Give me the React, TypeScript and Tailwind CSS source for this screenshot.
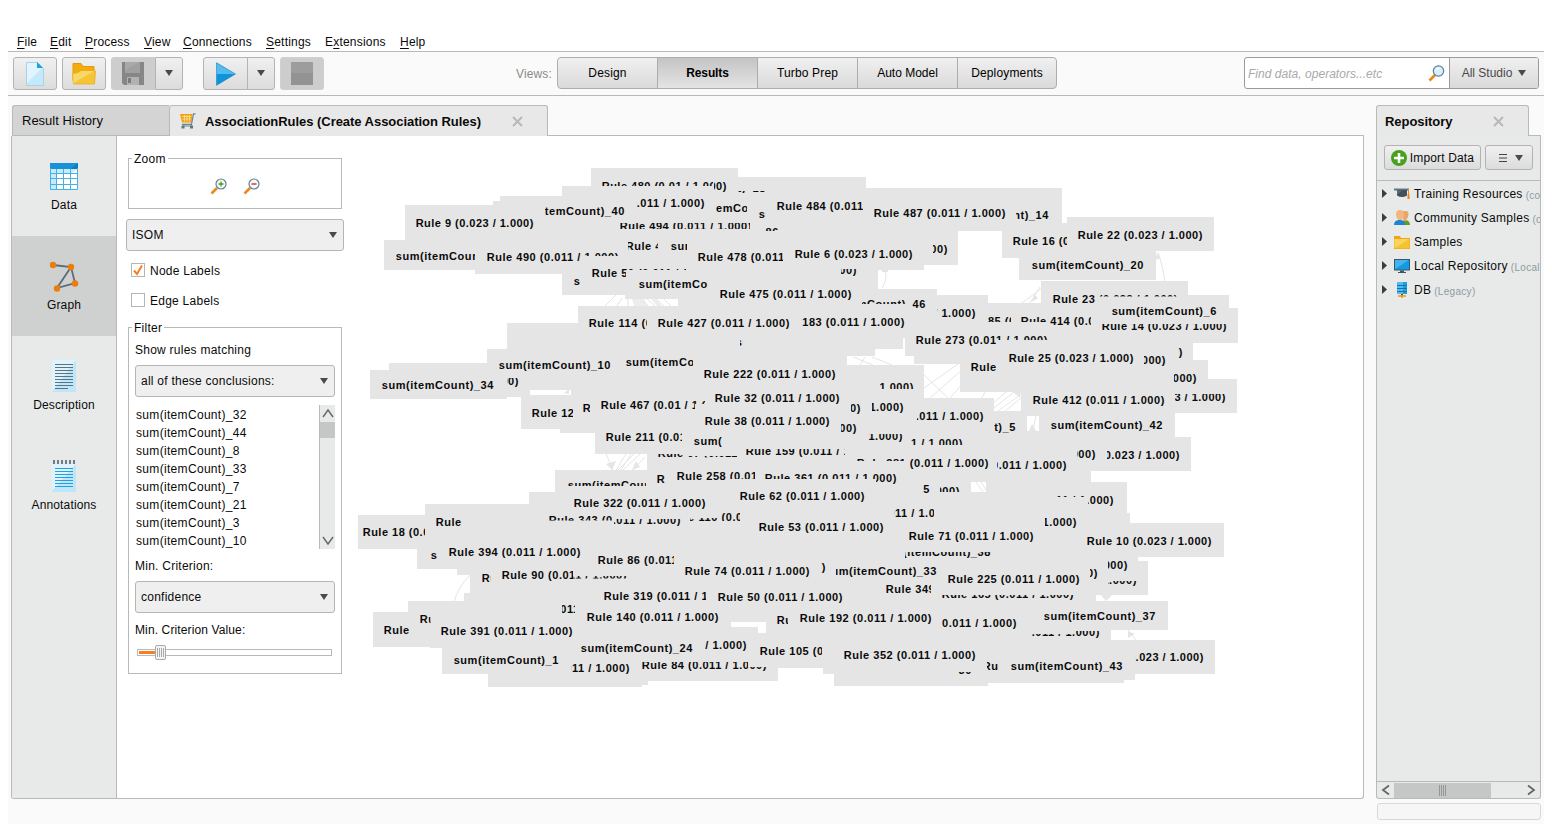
import React from "react";

type Box = [number, number, number, number];
// text, left edge, vertical centre, drawn width, visible windows (x1, y1, x2, y2)
type Label = [string, number, number, number, Box[]?];

const R3 = 131;
const R2 = 124;
const R1 = 117;
const S2 = 111;
const S1 = 104;
const rule = (n: string | number, v = "0.011") => `Rule ${n} (${v} / 1.000)`;
const sum = (n: number) => `sum(itemCount)_${n}`;
const span = (x1: number, x2: number, c: number): Box[] => [[x1, c - 8, x2, c + 8]];

const labels: Label[] = [
  [rule(480, "0.01"), 602, 186, R2, [[600, 170, 713, 186], [714, 170, 730, 196]]],
  [rule(488), 573, 203, R3, span(636, 706, 203)],
  [sum(40), 513, 211, S2, span(545, 626, 211)],
  [rule(494), 620, 226, R3, [[619, 223, 750, 229]]],
  [sum(12), 680, 208, S2, span(716, 747, 208)],
  [sum(18), 654, 188, S2, [[738, 191, 766, 193]]],
  [sum(26), 759, 214, S2, span(758, 766, 214)],
  [rule(484), 777, 206, R3, span(776, 863, 206)],
  [rule(487), 874, 213, R3],
  [sum(14), 937, 215, S2, span(1016, 1050, 215)],
  [sum(86), 667, 232, S2, [[765, 227, 779, 231]]],
  [rule(16, "0.023"), 1013, 241, R2, span(1012, 1067, 241)],
  [rule(22, "0.023"), 1078, 235, R2],
  [rule(9, "0.023"), 416, 223, R1],
  [sum(20), 1032, 265, S2],
  [rule(482), 816, 249, R3, span(933, 949, 249)],
  [sum(31), 396, 256, S2, span(395, 475, 256)],
  [rule(490), 487, 257, R3, [[486, 249, 582, 266], [582, 249, 622, 256]]],
  [rule(495), 626, 246, R3, span(628, 658, 246)],
  [sum(28), 671, 246, S2, span(670, 687, 246)],
  [rule(478), 698, 257, R3, span(697, 783, 257)],
  [rule(6, "0.023"), 795, 254, R1],
  [rule(56), 592, 273, R2, [[591, 265, 626, 282], [626, 265, 686, 270]]],
  [sum(29), 574, 281, S2, span(573, 580, 281)],
  [sum(45), 639, 284, S2, span(638, 708, 284)],
  [rule(475), 720, 294, R3],
  [rule(477), 725, 270, R3, [[841, 269, 858, 276]]],
  [sum(46), 814, 304, S2, [[862, 298, 910, 304], [912, 296, 927, 312]]],
  [rule(114), 589, 323, R3, span(588, 647, 323)],
  [rule(427), 658, 323, R3],
  [rule(183), 773, 322, R3, span(801, 906, 322)],
  [rule(434), 844, 313, R3, span(937, 977, 313)],
  [rule(185), 952, 321, R3, [[987, 314, 1011, 322]]],
  [rule(414), 1021, 321, R3, [[1020, 314, 1050, 322], [1050, 314, 1091, 330]]],
  [rule(23, "0.023"), 1053, 299, R2, [[1052, 291, 1099, 307], [1099, 291, 1178, 296.5]]],
  [sum(6), 1112, 311, S1],
  [rule(14, "0.023"), 1102, 326, R2, [[1101, 324, 1228, 336]]],
  [rule(273), 916, 340, R3, [[915, 332, 996, 348], [996, 332, 1048, 340]]],
  [rule(25, "0.023"), 1009, 358, R2],
  [rule(27), 1041, 360, R2, span(1144, 1167, 360)],
  [rule(29), 1058, 352, R2, span(1178, 1184, 352)],
  [rule(306), 971, 367, R3, span(970, 996, 367)],
  [rule(31), 1072, 378, R2, span(1174, 1198, 378)],
  [rule(17, "0.023"), 1101, 397, R2, [[1175, 394, 1227, 406]]],
  [rule(412), 1033, 400, R3],
  [sum(42), 1051, 425, S2],
  [sum(34), 382, 385, S2],
  [rule(44), 394, 381, R2, [[507, 378, 520, 387]]],
  [sum(10), 499, 365, S2],
  [sum(9), 626, 362, S1, span(625, 693, 362)],
  [sum(11), 736, 342, S2, span(740, 743, 342)],
  [rule(222), 704, 374, R3],
  [rule(32), 715, 398, R2],
  [rule(38), 705, 421, R2],
  [rule(467, "0.01"), 601, 405, R2, [[600, 397, 695, 414], [695, 397, 705, 404]]],
  [rule(170), 583, 408, R3, span(582, 590, 408)],
  [rule(12), 532, 413, R2, span(531, 573, 413)],
  [rule(218), 782, 387, R3, [[879, 379, 915, 389]]],
  [rule(221), 772, 407, R3, span(872, 905, 407)],
  [rule(223), 729, 408, R3, span(851, 862, 408)],
  [rule(226), 725, 428, R3, span(841, 858, 428)],
  [rule(240), 852, 416, R3, span(917, 985, 416)],
  [sum(5), 911, 427, S1, span(994, 1017, 427)],
  [rule(241), 771, 436, R3, [[867, 434, 904, 444]]],
  [rule(244), 831, 443, R3, [[911, 436, 964, 445]]],
  [rule(211), 606, 437, R3, span(605, 682, 437)],
  [sum(41), 694, 441, S2, span(693, 722, 441)],
  [rule(159), 746, 451, R3, [[745, 449, 845, 459]]],
  [rule(67), 658, 453, R2, [[657, 454, 684, 458], [684, 456, 737, 457.5]]],
  [rule(381), 857, 463, R3, [[856, 455, 904, 461], [907, 455, 990, 472]]],
  [rule(382), 935, 465, R3, span(997, 1067, 465)],
  [rule(383), 964, 454, R3, span(1077, 1097, 454)],
  [rule(11, "0.023"), 1055, 455, R2, span(1107, 1181, 455)],
  [rule(258), 677, 476, R3, [[676, 468, 728, 485], [728, 468, 755, 479]]],
  [rule(60), 657, 479, R2, span(656, 665, 479)],
  [sum(15), 568, 485, S2, [[567, 478, 646, 486]]],
  [rule(361), 765, 478, R3, [[764, 470, 876, 479], [876, 470, 898, 487]]],
  [sum(25), 818, 489, S2, span(923, 930, 489)],
  [rule(362), 828, 491, R3, [[940, 484, 961, 492]]],
  [rule(62), 740, 496, R2],
  [rule(322), 574, 503, R3],
  [rule(343), 549, 520, R3, [[548, 513, 612, 520.5], [614, 519, 682, 529]]],
  [rule(110), 669, 517, R3, [[690, 518, 719, 521], [719, 510, 740, 521]]],
  [rule(371), 821, 513, R3, span(894, 934, 513)],
  [rule(53), 759, 527, R2],
  [rule(71), 909, 536, R2],
  [rule(10, "0.023"), 1087, 541, R2],
  [rule(93), 989, 500, R2, [[1088, 492, 1115, 508], [1056, 492, 1086, 497]]],
  [rule(95), 952, 522, R2, span(1045, 1077, 522)],
  [rule(18, "0.023"), 363, 532, R2, span(362, 425, 532)],
  [rule(390), 436, 522, R3, span(435, 462, 522)],
  [sum(19), 431, 555, S2, span(430, 437, 555)],
  [rule(394), 449, 552, R3],
  [rule(91), 482, 578, R2, span(481, 491, 578)],
  [rule(90), 502, 575, R2, [[501, 567, 573, 584], [573, 576, 628, 578.5]]],
  [rule(86), 598, 560, R2, span(597, 674, 560)],
  [rule(74), 685, 571, R2],
  [rule(76), 701, 567, R2, span(821, 828, 567)],
  [sum(33), 825, 571, S2, span(836, 938, 571)],
  [sum(38), 879, 552, S2, [[905, 552, 992, 562]]],
  [rule(225), 948, 579, R3],
  [rule(349), 886, 589, R3, span(885, 931, 589)],
  [rule(227), 966, 573, R3, span(1090, 1099, 573)],
  [rule(229), 996, 565, R3, span(1108, 1129, 565)],
  [rule(230), 1005, 580, R3, [[1108, 581, 1138, 590]]],
  [rule(165), 942, 594, R3, [[941, 595, 1075, 604]]],
  [rule(319), 604, 596, R3, span(603, 706, 596)],
  [rule(50), 718, 597, R2],
  [rule(301), 493, 609, R3, [[562, 602, 575, 613]]],
  [rule(140), 587, 617, R3],
  [rule(192), 800, 618, R3],
  [rule(190), 777, 620, R3, span(776, 788, 620)],
  [rule(193), 885, 623, R3, span(942, 1018, 623)],
  [sum(37), 1044, 616, S2],
  [rule(196), 968, 632, R3, [[1032, 634, 1074, 637], [1074, 631, 1101, 641]]],
  [rule(388), 384, 630, R3, span(383, 409, 630)],
  [rule(389), 420, 619, R3, span(419, 430.5, 619)],
  [rule(391), 441, 631, R3],
  [sum(1), 454, 660, S1],
  [sum(24), 581, 648, S2],
  [rule(101), 498, 668, R3, span(571, 631, 668)],
  [rule(103), 615, 645, R3, span(704, 748, 645)],
  [rule(84), 642, 665, R2, [[641, 662, 748, 674], [748, 667, 768, 673]]],
  [rule(105), 760, 651, R3, span(759, 822, 651)],
  [rule(352), 844, 655, R3],
  [rule(13, "0.023"), 1079, 657, R2, span(1135, 1205, 657)],
  [sum(43), 1011, 666, S2],
  [rule(353), 983, 666, R3, span(987, 999, 666)],
  [sum(30), 860, 670, S2, [[957, 672, 972, 675]]],
];

const silhouette =
  "M591 168H738V177H866V188H1062V223H1067V217H1214V251H1156V280H1019V258H1002V231H958V265H924V270H878V289H937V295H988V303H1041V281H1188V295H1229V308H1238V343H1193V360H1208V379H1237V413H1175V437H1191V471H1091V482H1127V513H1130V523H1224V557H1138V561H1148V595H1112V601H1168V630H1111V640H1215V674H1135V680H1124V683H988V686H834V674H823V668H778V681H648V685H642V687H488V674H442V648H430V647H373V612H408V601H464V593H470V575H457V569H417V549H358V515H425V504H529V492H555V470H647V454H595V433H560V429H521V397H507V399H370V370H389V363H487V349H507V323H578V306H678V299H625V295H562V274H475V270H384V240H405V205H493V201H500V196H562V186H591Z";
const gaps =
  "M875 349H903V338H905V356H914V364H960V392H1021V411H994V398H924V365H847V356H875Z M1027 416H1039V431H1027Z M971 482H986V492H971Z M731 622H766V633H758V627H731Z M1096 595H1112V601H1096Z M530 390H571V395H530Z";

function RuleGraph() {
  return (
    <svg className="block h-[662px] w-[1019px]" viewBox="344 136 1019 662">
      <defs>
        {labels.map((l, i) =>
          l[4] ? (
            <clipPath id={`label-${i}`} key={i}>
              {l[4].map((b, j) => (
                <rect key={j} x={b[0]} y={b[1]} width={b[2] - b[0]} height={b[3] - b[1]} />
              ))}
            </clipPath>
          ) : null,
        )}
      </defs>
      <path d={`${silhouette} ${gaps}`} fill="#e5e5e5" fillRule="evenodd" shapeRendering="crispEdges" />
      <g stroke="#e5e5e5" strokeWidth="1" fill="none">
        <path d="M605 306l12-12M617 306l5-8M628 299v7M640 299l8 7M647 299l8 7M656 299l8 7M664 299l7 7M470 575q-12 12-16 27" />
        <path d="M606 454l7 16M634 454l-16 16M640 454l-17 16M626 454l-10 16M645 457l-12 13M631 454l-10 16" />
        <path d="M1158 252q5 14 7 30M1022 303l20-15M1040 287l-10 16M885 270q3 9-3 18M924 388l34-24M924 375l24 23M865 357l-5 8M853 357l20 8M872 357l20 8" />
        <path d="M930 398l33-29M950 398l15-17M975 411l10-19M984 411l22-19M994 408l20-16M998 411l22-16M1005 411l16-13M1036 416l-3 15M976 482l7 10M981 482l5 8M1128 630l8 10" />
      </g>
      <g fill="#e5e5e5">
        <path d="M606 464l6 6 4-9zM636 461l-4 9 8-3zM1032 302l2-8 4 4zM1157 253l-2 7 6-2zM882 272h6v-3h-6zM1020 398l-7-6h8zM1029 431l3-7 4 7zM1101 595l5 6 6-6zM1128 631v7l7-4zM564 393l5-4v5z" />
        <path d="M632 299h12l4 7h-14zM651 299l6 7h5l-6-7z" opacity=".7" />
      </g>
      <g fontFamily="'Liberation Sans', Arial, sans-serif" fontWeight="700" fontSize="11" fill="#0a0a0a">
        {labels.map((l, i) => (
          <g key={i} clipPath={l[4] ? `url(#label-${i})` : undefined}>
            <text x={l[1] - 0.3} y={l[2] + 4} textLength={l[3] + 0.8} lengthAdjust="spacing">
              {l[0]}
            </text>
          </g>
        ))}
      </g>
    </svg>
  );
}

const Down = ({ className = "" }: { className?: string }) => (
  <svg className={`h-[6px] w-[8px] shrink-0 ${className}`} viewBox="0 0 8 6">
    <path d="M0 0h8L4 6z" fill="#4a4a4a" />
  </svg>
);

const Close = ({ className = "" }: { className?: string }) => (
  <svg className={`h-[11px] w-[11px] shrink-0 ${className}`} viewBox="0 0 11 11">
    <path d="M1 1l9 9M10 1l-9 9" stroke="#b8b8b8" strokeWidth="2" />
  </svg>
);

function Menu({ pre = "", k, rest, w }: { pre?: string; k: string; rest: string; w: string }) {
  return (
    <span className={`shrink-0 ${w}`}>
      {pre}
      <span className="underline underline-offset-2">{k}</span>
      {rest}
    </span>
  );
}

const btn = "border border-[#b3b3b3] bg-linear-to-b from-[#f0f0f0] to-[#dcdcdc] flex items-center justify-center shrink-0";

function MenuBar() {
  return (
    <nav className="flex h-[52px] shrink-0 items-end border-b border-[#b9b9b9] bg-white pb-px pl-[9px] leading-[15px] tracking-[0.2px]">
      <Menu k="F" rest="ile" w="w-[33px]" />
      <Menu k="E" rest="dit" w="w-[35px]" />
      <Menu k="P" rest="rocess" w="w-[59px]" />
      <Menu k="V" rest="iew" w="w-[39px]" />
      <Menu k="C" rest="onnections" w="w-[83px]" />
      <Menu k="S" rest="ettings" w="w-[59px]" />
      <Menu pre="E" k="x" rest="tensions" w="w-[75px]" />
      <Menu k="H" rest="elp" w="w-[40px]" />
    </nav>
  );
}

function ToolBar() {
  return (
    <div className="flex h-[44px] shrink-0 items-start border-b border-[#b9b9b9] pl-[4px] pr-[5px] pt-[5px]">
      <div className={`${btn} ml-px h-[33px] w-[44px] rounded-[3px]`}>
        <svg className="h-[24px] w-[18px]" viewBox="0 0 18 24">
          <path d="M.5 .5h11l6 6v17H.5z" fill="#c4e9fa" stroke="#a5d4ea" />
          <path d="M1 1h10l5 5L1 21z" fill="#e2f4fd" />
          <path d="M11 0l6 6h-6z" fill="#1d9fe0" />
        </svg>
      </div>
      <div className={`${btn} ml-[5px] h-[33px] w-[44px] rounded-[3px]`}>
        <svg className="h-[22px] w-[24px]" viewBox="0 0 24 22">
          <path d="M1 .5h8l2 3h11v14H1z" fill="#f4ac0c" stroke="#e39b06" />
          <path d="M.5 11l5-1 3-2h15l-1 13h-21z" fill="#f5c536" stroke="#e9ad1d" strokeWidth=".8" />
          <path d="M1 11l5-1 3-2h13.500L1.500 20z" fill="#f9d768" />
        </svg>
      </div>
      <div className="ml-[5px] flex h-[33px] w-[44px] shrink-0 items-center justify-center rounded-l-[3px] bg-[#cdcdcd]">
        <svg className="h-[23px] w-[22px]" viewBox="0 0 22 23">
          <path d="M0 0h22v23H2l-2-2z" fill="#868686" />
          <path d="M3 0h15v11H3z" fill="#a0a0a0" />
          <path d="M3 0h15L3 8z" fill="#a9a9a9" />
          <path d="M5 15h12v8H5z" fill="#b2b2b2" />
          <path d="M6 16h3v5H6z" fill="#7b7b7b" />
        </svg>
      </div>
      <div className={`${btn} h-[33px] w-[28px] rounded-r-[3px]`}>
        <Down className="-mt-px" />
      </div>
      <div className={`${btn} ml-[20px] h-[33px] w-[45px] rounded-l-[3px]`}>
        <svg className="h-[24px] w-[20px]" viewBox="0 0 20 24">
          <path d="M.5 .5l19 11.500H.5z" fill="#55baf0" />
          <path d="M.5 23.500l19-11.500H.5z" fill="#0f93db" />
          <path d="M.5 .8l19 11.200-19 11.200z" fill="none" stroke="#2b8fc6" strokeWidth=".7" />
        </svg>
      </div>
      <div className={`${btn} -ml-px h-[33px] w-[28px] rounded-r-[3px]`}>
        <Down className="-mt-px" />
      </div>
      <div className="ml-[5px] flex h-[33px] w-[44px] shrink-0 items-center justify-center rounded-[3px] border border-[#d0d0d0] bg-[#cdcdcd]">
        <div className="h-[23px] w-[22px] bg-linear-to-b from-[#9d9d9d] from-50% to-[#939393] to-50%" />
      </div>
      <div className="flex h-[33px] w-[233px] shrink-0 items-center justify-end pr-[5px] text-[#8a8a8a]">Views:</div>
      <div className="flex h-[32px] w-[500px] shrink-0 overflow-hidden rounded-[4px] border border-[#adadad] bg-linear-to-b from-[#f0f0f0] to-[#dadada] text-black">
        <div className="flex w-[100px] items-center justify-center border-r border-[#adadad]">Design</div>
        <div className="flex w-[100px] items-center justify-center border-r border-[#adadad] bg-linear-to-b from-[#c4c4c4] to-[#e4e4e4] font-bold tracking-[-0.1px]">Results</div>
        <div className="flex w-[100px] items-center justify-center border-r border-[#adadad]">Turbo Prep</div>
        <div className="flex w-[100px] items-center justify-center border-r border-[#adadad] tracking-[0px]">Auto Model</div>
        <div className="flex flex-1 items-center justify-center">Deployments</div>
      </div>
      <div className="ml-auto flex h-[32px] w-[295px] shrink-0 overflow-hidden rounded-[3px] border border-[#9a9a9a] bg-white">
        <div className="flex flex-1 items-center justify-between pl-[3px] pr-[4px] pt-px italic tracking-[0.03px] text-[#a9a9a9]">
          Find data, operators...etc
          <svg className="h-[17px] w-[17px]" viewBox="0 0 17 17">
            <path d="M1.500 15.500l6-6" stroke="#e8861a" strokeWidth="2.600" />
            <circle cx="10.500" cy="6" r="5.200" fill="#d5effc" stroke="#5f7f92" strokeWidth="1.200" />
            <path d="M7 6a4 4 0 0 1 6-3z" fill="#f2fbff" />
          </svg>
        </div>
        <div className="flex w-[89px] items-center justify-center gap-[6px] border-l border-[#9a9a9a] bg-linear-to-b from-[#f0f0f0] to-[#dadada] tracking-[0px] text-[#4a4a4a]">
          All Studio <Down />
        </div>
      </div>
    </div>
  );
}

function SideItem({ label, active = false, children }: { label: string; active?: boolean; children: React.ReactNode }) {
  return (
    <div className={`flex h-[100px] flex-col items-center ${active ? "bg-[#cfd1d0]" : ""}`}>
      <div className="flex h-[59px] items-end justify-center pb-[3px]">{children}</div>
      <span className="pt-[3px] leading-[15px]">{label}</span>
    </div>
  );
}

function SideBar() {
  return (
    <aside className="w-[105px] shrink-0 border-r border-[#b9b9b9] bg-[#e8eae9]">
      <SideItem label="Data">
        <svg className="mb-[2px] h-[27px] w-[28px]" viewBox="0 0 28 27">
          <path d="M0 0h28v27H0z" fill="#fff" />
          <path d="M0 6h7L6 27H0zM0 6h28l-8 5H0z" fill="#c8eafa" />
          <path d="M0 0h28v6H0z" fill="#1693d8" />
          <path d="M28 0v6h-7z" fill="#0b7cbf" />
          <path d="M.5 5v21.500h27V5M6.500 6v21M13.500 6v21M20.500 6v21M0 10.500h28M0 15.500h28M0 21.500h28" stroke="#45b0e6" fill="none" />
        </svg>
      </SideItem>
      <SideItem label="Graph" active>
        <svg className="h-[31px] w-[30px]" viewBox="0 0 30 31">
          <path d="M4 4l18 2 4 16-18 5L22 6" fill="none" stroke="#5c6c78" strokeWidth="1.800" />
          <g fill="#ee7c0b">
            <circle cx="4" cy="4" r="3.200" />
            <circle cx="22" cy="6" r="3.200" />
            <circle cx="26" cy="22.500" r="3.200" />
            <circle cx="8" cy="27.500" r="3.200" />
          </g>
        </svg>
      </SideItem>
      <SideItem label="Description">
        <svg className="h-[32px] w-[24px]" viewBox="0 0 24 32">
          <path d="M0 0h24v32H0z" fill="#bfe5f8" />
          <path d="M0 0h24L0 32z" fill="#dff3fc" />
          <path d="M3 4.500h18M3 7.500h18M3 10.500h18M3 13.500h18M3 16.500h18M3 19.500h18M3 22.500h18M3 25.500h18M3 28.500h13" stroke="#5b7482" />
        </svg>
      </SideItem>
      <SideItem label="Annotations">
        <svg className="h-[32px] w-[24px]" viewBox="0 0 24 32">
          <path d="M0 4h24v28H0z" fill="#bfe5f8" />
          <path d="M0 4h24L0 31z" fill="#dff3fc" />
          <path d="M2 0v4M6 0v4M10 0v4M14 0v4M18 0v4M22 0v4" stroke="#5b7482" strokeWidth="1.800" />
          <path d="M3 8.500h18M3 11.500h18M3 14.500h18M3 17.500h18M3 20.500h18M3 23.500h18M3 26.500h18" stroke="#219fe0" />
        </svg>
      </SideItem>
    </aside>
  );
}

function Select({ label, className }: { label: string; className: string }) {
  return (
    <div className={`flex h-[32px] shrink-0 items-center justify-between rounded-[3px] border border-[#b5b5b5] bg-[#efefef] pl-[5px] pr-[6px] ${className}`}>
      <span className="pt-px">{label}</span>
      <Down />
    </div>
  );
}

function ZoomGlass({ minus = false }: { minus?: boolean }) {
  return (
    <svg className="h-[17px] w-[17px]" viewBox="0 0 17 17">
      <path d="M1.500 15.500l5.500-5.500" stroke="#ea8a1c" strokeWidth="2.600" />
      <circle cx="11" cy="6" r="5" fill="#f3f9fc" stroke="#687f8d" strokeWidth="1.200" />
      <path d={minus ? "M8.500 6h5" : "M8.500 6h5M11 3.500v5"} stroke={minus ? "#d8402a" : "#4a9a1e"} strokeWidth="1.300" />
    </svg>
  );
}

const items = [32, 44, 8, 33, 7, 21, 3, 10];

function Controls() {
  return (
    <section className="flex w-[227px] shrink-0 flex-col pl-[9px] leading-[17px] tracking-[0.25px]">
      <fieldset className="ml-[2px] mt-[15px] h-[58px] w-[214px] shrink-0 border border-[#b9b9b9]">
        <legend className="ml-[3px] h-[15px] px-[2px]">Zoom</legend>
        <div className="flex justify-center gap-[16px] pr-px pt-[12px]">
          <ZoomGlass />
          <ZoomGlass minus />
        </div>
      </fieldset>
      <Select label="ISOM" className="mt-[10px] w-[218px]" />
      <div className="ml-[5px] mt-[12px] flex h-[15px] shrink-0 items-start gap-[5px]">
        <div className="h-[14px] w-[14px] border border-[#b5b5b5] bg-white">
          <svg className="block h-[12px] w-[12px]" viewBox="0 0 12 12">
            <path d="M2 6.500l3 3.500L10 1.500" fill="none" stroke="#fa7d24" strokeWidth="2" />
          </svg>
        </div>
        <span>Node Labels</span>
      </div>
      <div className="ml-[5px] mt-[15px] flex h-[15px] shrink-0 items-start gap-[5px]">
        <div className="h-[14px] w-[14px] border border-[#b5b5b5] bg-white" />
        <span>Edge Labels</span>
      </div>
      <fieldset className="ml-[2px] mt-[12px] h-[354px] w-[214px] shrink-0 border border-[#b9b9b9] pl-[6px]">
        <legend className="-ml-[3px] h-[15px] px-[2px]">Filter</legend>
        <div className="mt-[7px] h-[15px]">Show rules matching</div>
        <Select label="all of these conclusions:" className="mt-[8px] w-[200px]" />
        <div className="mt-[8px] flex h-[144px] w-[200px]">
          <div className="flex-1 pl-px leading-[18px] tracking-[0.32px]">
            {items.map((n) => (
              <div key={n} className="h-[18px] pt-px">{`sum(itemCount)_${n}`}</div>
            ))}
          </div>
          <div className="flex w-[16px] flex-col items-center border-l border-[#b9b9b9] bg-[#e8eae9]">
            <svg className="h-[17px] w-[15px]" viewBox="0 0 15 17">
              <path d="M3 12l5-7 5 7" fill="none" stroke="#666" strokeWidth="1.400" />
            </svg>
            <div className="h-[16px] w-full bg-[#c5c7c6]" />
            <svg className="mt-auto h-[17px] w-[15px]" viewBox="0 0 15 17">
              <path d="M3 5l5 7 5-7" fill="none" stroke="#666" strokeWidth="1.400" />
            </svg>
          </div>
        </div>
        <div className="mt-[9px] h-[15px]">Min. Criterion:</div>
        <Select label="confidence" className="mt-[8px] w-[200px]" />
        <div className="mt-[9px] h-[15px] tracking-[0.12px]">Min. Criterion Value:</div>
        <div className="ml-[2px] mt-[8px] flex h-[15px] w-[195px] items-center">
          <div className="h-[7px] w-[18px] border border-r-0 border-[#b9b9b9] bg-white py-px pl-px">
            <div className="h-[3px] bg-[#fa7d24]" />
          </div>
          <div className="flex h-[15px] w-[11px] items-center justify-center gap-px rounded-[2px] border border-[#aaa] bg-[#f4f4f4]">
            <div className="h-[9px] w-px bg-[#aaa]" />
            <div className="h-[9px] w-px bg-[#aaa]" />
            <div className="h-[9px] w-px bg-[#aaa]" />
            <div className="h-[9px] w-px bg-[#aaa]" />
          </div>
          <div className="h-[7px] flex-1 border border-l-0 border-[#b9b9b9] bg-white" />
        </div>
      </fieldset>
    </section>
  );
}

function ResultsPane() {
  return (
    <main className="flex w-[1353px] shrink-0 flex-col">
      <div className="flex h-[31px] shrink-0 items-start pl-px">
        <div className="h-[31px] w-[157px] rounded-tl-[3px] border border-r-0 border-[#b9b9b9] bg-[#d4d4d4] pl-[9px] pt-[7px] text-[13px] leading-[15px] tracking-[0px]">Result History</div>
        <div className="flex h-[31px] w-[379px] items-center rounded-t-[3px] border border-b-0 border-[#b9b9b9] bg-[#e8e8e8] pl-[10px] font-bold">
          <svg className="h-[16px] w-[16px]" viewBox="0 0 16 16">
            <path d="M0 1h12.500l-1 8.500H2z" fill="#f0a212" />
            <path d="M2 3.500h9.500M2.500 6h8.500M4.500 2v6.500M7 2v6.500M9.500 2v6.500" stroke="#fde3a4" strokeWidth=".8" />
            <path d="M15.500 .8h-2l-2 10.500H2M3 13h9" fill="none" stroke="#71838e" strokeWidth="1.200" />
            <path d="M1.500 12.500h3v3h-3zM10 12.500h3v3h-3z" fill="#5f7684" />
          </svg>
          <span className="ml-[9px] w-[307px] text-[13px] leading-[15px] tracking-[-0.04px]">AssociationRules (Create Association Rules)</span>
          <Close />
        </div>
        <div className="h-[31px] flex-1 border-b border-[#b9b9b9]" />
      </div>
      <div className="flex h-[663px] shrink-0 overflow-hidden rounded-b-[3px] border border-t-0 border-[#b9b9b9] bg-white">
        <SideBar />
        <Controls />
        <RuleGraph />
      </div>
    </main>
  );
}

const repoIcons = [
  <svg key="a" className="h-[16px] w-[16px]" viewBox="0 0 16 16">
    <path d="M0 2.500h15v2H0z" fill="#64747f" />
    <path d="M3 4h10v5.500q-5 3-10 0z" fill="#41525e" />
    <path d="M3 4.500h5l-5 4z" fill="#5c6d79" />
    <path d="M14.500 3v6" stroke="#ee8414" />
    <path d="M13.500 8.500h2v4.500h-2z" fill="#ee8414" />
  </svg>,
  <svg key="b" className="h-[16px] w-[16px]" viewBox="0 0 16 16">
    <path d="M7 15c0-4 2-5 4-5s5 1 5 5z" fill="#5e9c2f" />
    <path d="M8 1h5q2 1 1.500 4t-2 4v2h-3z" fill="#e9a66c" />
    <path d="M2 4q0-4 4-4t4 4-2 5v2H4V9Q2 8 2 4z" fill="#f3b680" />
    <path d="M0 15c0-4 3-5 5.500-5S11 11 11 15z" fill="#1b86d0" />
  </svg>,
  <svg key="c" className="h-[16px] w-[16px]" viewBox="0 0 16 16">
    <path d="M0 2h6l1 2h9v11H0z" fill="#efa610" />
    <path d="M.5 5h15v9.500H.5z" fill="#f5c330" />
    <path d="M.5 5h15l-15 9z" fill="#fad55e" />
  </svg>,
  <svg key="d" className="h-[16px] w-[16px]" viewBox="0 0 16 16">
    <path d="M0 1h16v11.500H0z" fill="#3d5666" />
    <path d="M1 2h14v9.500H1z" fill="#129ae3" />
    <path d="M1 2h14L1 11z" fill="#44b4f0" />
    <path d="M6 12.500h4v1.500H6zM4 14h8v1H4z" fill="#3d5666" />
  </svg>,
  <svg key="e" className="h-[16px] w-[16px]" viewBox="0 0 16 16">
    <path d="M3 0h10v12H3z" fill="#209fe0" />
    <path d="M3 0h6v12H3z" fill="#55bbed" />
    <path d="M3 3.500h10M3 6.500h10M3 9.500h10" stroke="#1174ad" />
    <path d="M8 12v2" stroke="#3d5666" strokeWidth="2" />
    <path d="M4 14h8M8 13v3" stroke="#e79b15" strokeWidth="1.500" />
  </svg>,
];

const repos = [
  ["Training Resources", "(connected)"],
  ["Community Samples", "(connected)"],
  ["Samples", ""],
  ["Local Repository", "(Local)"],
  ["DB", "(Legacy)"],
];

function Repository() {
  return (
    <aside className="ml-[12px] flex w-[165px] shrink-0 flex-col">
      <div className="flex h-[31px] shrink-0">
        <div className="flex h-[31px] w-[153px] items-center justify-between rounded-t-[3px] border border-b-0 border-[#b9b9b9] bg-[#e8e8e8] pl-[8px] pr-[24px] font-bold">
          <span className="text-[13px] leading-[15px] tracking-[-0.05px]">Repository</span>
          <Close />
        </div>
        <div className="h-[31px] flex-1 border-b border-[#b9b9b9]" />
      </div>
      <div className="flex h-[663px] shrink-0 flex-col overflow-hidden rounded-b-[3px] border border-t-0 border-[#b9b9b9] bg-[#e8eae9]">
        <div className="flex h-[45px] shrink-0 gap-[4px] border-b border-[#b9b9b9] pl-[7px] pt-[9px]">
          <div className={`${btn} h-[25px] w-[97px] gap-[3px] rounded-[3px]`}>
            <svg className="h-[16px] w-[16px]" viewBox="0 0 16 16">
              <circle cx="8" cy="8" r="8" fill="#46a11c" />
              <path d="M8 3v10M3 8h10" stroke="#fff" strokeWidth="2.600" />
            </svg>
            <span className="whitespace-nowrap">Import Data</span>
          </div>
          <div className={`${btn} h-[25px] w-[48px] gap-[8px] rounded-[3px] pl-[4px]`}>
            <svg className="h-[8px] w-[8px]" viewBox="0 0 8 8">
              <path d="M0 .5h8M0 4h8M0 7.500h8" stroke="#444" />
            </svg>
            <Down />
          </div>
        </div>
        <div className="flex min-h-0 flex-1 flex-col pt-px tracking-[0.28px]">
          {repos.map(([name, note], i) => (
            <div key={name} className="flex h-[24px] shrink-0 items-center overflow-hidden whitespace-nowrap pl-[5px]">
              <svg className="-mt-px mr-[7px] h-[9px] w-[5px] shrink-0" viewBox="0 0 5 9">
                <path d="M0 0v9l5-4.500z" fill="#3c3c3c" />
              </svg>
              <span className="-mt-px mr-[4px] shrink-0">{repoIcons[i]}</span>
              <span>{name}</span>
              <span className="ml-[3px] pt-[2px] text-[10px] tracking-[0.3px] text-[#8d9aa0]">{note}</span>
            </div>
          ))}
        </div>
        <div className="flex h-[17px] shrink-0 items-center border-t border-[#b9b9b9]">
          <svg className="h-[16px] w-[17px]" viewBox="0 0 17 16">
            <path d="M12 3.500L6 8l6 4.500" fill="none" stroke="#666" strokeWidth="1.800" />
          </svg>
          <div className="flex h-[15px] w-[97px] items-center justify-center gap-px bg-[#c5c7c6]">
            <div className="h-[11px] w-px bg-[#969696]" />
            <div className="h-[11px] w-px bg-[#969696]" />
            <div className="h-[11px] w-px bg-[#969696]" />
            <div className="h-[11px] w-px bg-[#969696]" />
          </div>
          <svg className="ml-auto h-[16px] w-[17px]" viewBox="0 0 17 16">
            <path d="M5 3.500L11 8l-6 4.500" fill="none" stroke="#666" strokeWidth="1.800" />
          </svg>
        </div>
      </div>
      <div className="ml-px mt-[4px] h-[17px] shrink-0 rounded-[3px] border border-[#d8d8d8] bg-[#f6f6f6]" />
    </aside>
  );
}

export default function App() {
  return (
    <div className="h-[832px] w-[1552px] overflow-hidden bg-white px-[8px] font-['Liberation_Sans',Arial,sans-serif] text-[12px] tracking-[0.15px] text-[#0a0a0a]">
      <div className="flex h-[824px] flex-col bg-[#fafafa]">
        <MenuBar />
        <ToolBar />
        <div className="flex min-h-0 flex-1 pl-[3px] pt-[9px]">
          <ResultsPane />
          <Repository />
        </div>
      </div>
    </div>
  );
}
